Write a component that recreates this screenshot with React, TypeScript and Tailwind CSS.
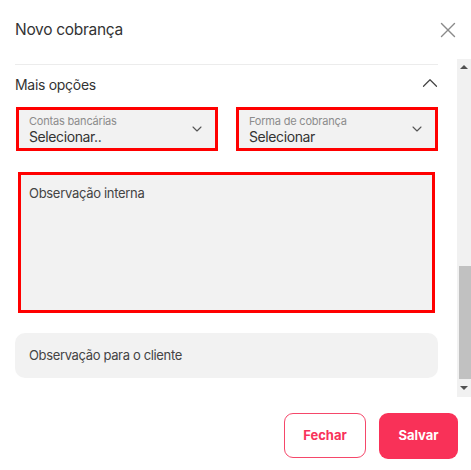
import { ChevronDown, ChevronUp, X } from 'lucide-react';

export default function App() {
  return (
    <div className="w-[471px] h-[470px] bg-white flex flex-col overflow-hidden font-['Inter',sans-serif] text-[#333]">
      <header className="h-[59px] shrink-0 flex items-center justify-between pl-[15px] pr-[10px] pt-[1px]">
        <h1 className="text-[15.5px] leading-none tracking-[-0.3px] text-[#333]">Novo cobrança</h1>
        <X className="w-[26px] h-[26px] text-[#8a8a8a]" strokeWidth={1.3} />
      </header>

      <div className="h-[338px] shrink-0 flex">
        <div className="flex-1 pl-[15px] pr-[19px]">
          <div className="h-px bg-[#ececec] mt-[5px]" />

          <div className="flex items-center justify-between h-[39px] pb-[1px]">
            <span className="text-[14px] tracking-[-0.3px] text-[#333]">Mais opções</span>
            <ChevronUp className="w-[26px] h-[26px] text-[#444] -mr-[5px] -mt-[2px]" strokeWidth={1.1} />
          </div>

          <div className="flex justify-between pl-px mt-[3px]">
            <SelectField label="Contas bancárias" value="Selecionar.." />
            <SelectField label="Forma de cobrança" value="Selecionar" />
          </div>

          <div className="mt-[21px] mx-[3px] h-[141px] bg-[#f2f2f2] border-[3px] border-[#ff0000] px-[8px] pt-[10px]">
            <p className="text-[13px] leading-[16px] tracking-[-0.3px] text-[#444]">Observação interna</p>
          </div>

          <div className="mt-[20px] h-[45px] bg-[#f2f2f2] rounded-[10px] flex items-center px-[14px]">
            <span className="text-[13px] tracking-[-0.35px] text-[#444]">Observação para o cliente</span>
          </div>
        </div>

        <div className="w-[14px] shrink-0 bg-[#f1f1f1] flex flex-col items-stretch">
          <div className="h-[15px] flex items-center justify-center">
            <div className="w-0 h-0 border-l-[4px] border-r-[4px] border-b-[4px] border-l-transparent border-r-transparent border-b-[#505050]" />
          </div>
          <div className="h-[192px]" />
          <div className="h-[113px] bg-[#c1c1c1] ml-[2px]" />
          <div className="flex-1 flex items-center justify-center">
            <div className="w-0 h-0 border-l-[4px] border-r-[4px] border-t-[4px] border-l-transparent border-r-transparent border-t-[#505050]" />
          </div>
        </div>
      </div>

      <footer className="flex justify-end items-start gap-[13px] pt-[16px] pr-[13px]">
        <button className="w-[82px] h-[45px] rounded-[9px] border border-[#f5476a] text-[#f8325a] text-[13px] font-bold">
          Fechar
        </button>
        <button className="w-[79px] h-[46px] rounded-[9px] bg-[#f93158] text-white text-[13px] font-bold">
          Salvar
        </button>
      </footer>
    </div>
  );
}

function SelectField({ label, value }: { label: string; value: string }) {
  return (
    <div className="w-[202px] h-[44px] bg-[#f2f2f2] border-[3px] border-[#ff0000] flex items-center justify-between pl-[10px] pr-[10px]">
      <div className="flex flex-col pt-[2px]">
        <span className="text-[11px] leading-[13px] tracking-[-0.2px] text-[#8c8c8c]">{label}</span>
        <span className="text-[14px] leading-[18px] tracking-[-0.4px] text-[#333]">{value}</span>
      </div>
      <ChevronDown className="w-[16px] h-[16px] text-[#555]" strokeWidth={1.6} />
    </div>
  );
}
